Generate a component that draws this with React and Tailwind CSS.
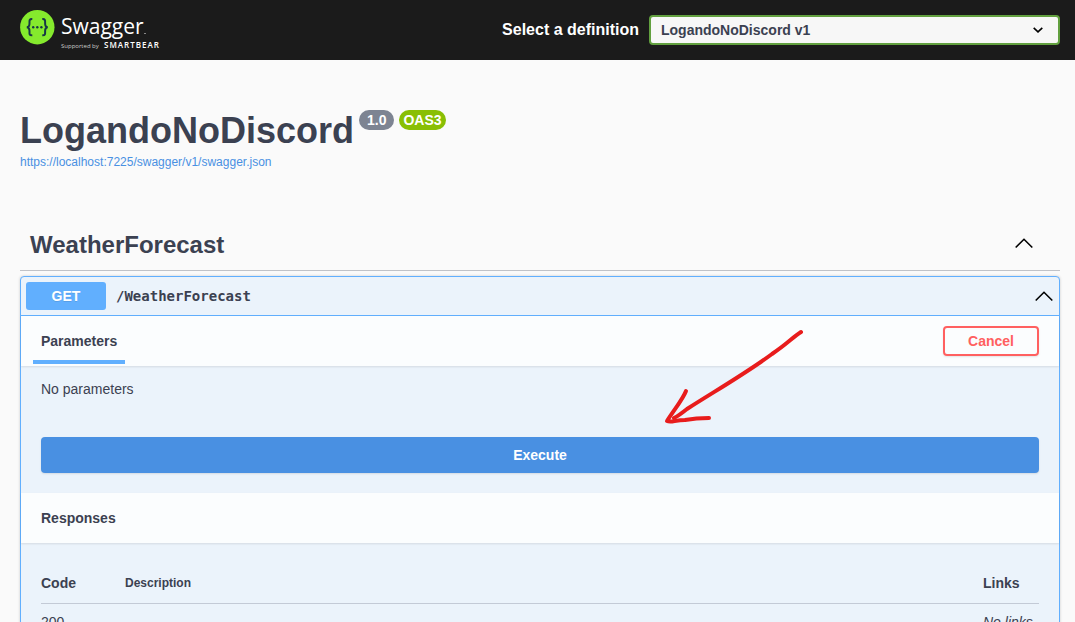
import React from "react";

function Logo() {
  return (
    <a href="#" aria-label="Swagger" className="block shrink-0">
      <svg width="142" height="42" viewBox="0 0 142 42" className="block">
        <circle cx="17.3" cy="18.2" r="17.2" fill="#85ea2d" />
        <g fill="none" stroke="#173647" strokeWidth="2">
          <path d="M12.300 10.100C9.200 9.900 9.400 11.500 9.500 13.900C9.600 16.500 9.300 18.100 6.800 18.200C9.300 18.400 9.600 20 9.500 22.500C9.400 24.900 9.200 26.500 12.300 26.300" />
          <path d="M22.300 10.100C25.400 9.900 25.200 11.500 25.100 13.900C25 16.500 25.300 18.100 27.800 18.200C25.300 18.400 25 20 25.100 22.500C25.200 24.900 25.400 26.500 22.300 26.300" />
        </g>
        <g fill="#173647">
          <circle cx="13.2" cy="18.2" r="1.2" />
          <circle cx="17.3" cy="18.2" r="1.2" />
          <circle cx="21.4" cy="18.2" r="1.2" />
        </g>
        <text x="41" y="25" fill="#fff" className="font-['Open_Sans','Noto_Sans',sans-serif] text-[21px]">Swagger</text>
        <rect x="124" y="24" width="2" height="1" fill="#888" />
        <text x="41" y="39" fill="#ccc" className="font-['Open_Sans','Noto_Sans',sans-serif] text-[6px]">Supported by</text>
        <text x="84" y="39" fill="#fff" className="font-['Open_Sans','Noto_Sans',sans-serif] text-[8px] font-semibold tracking-[1px]">SMARTBEAR</text>
      </svg>
    </a>
  );
}

function CollapseIcon() {
  return (
    <svg width="20" height="20" viewBox="0 0 20 20" className="block" fill="none" stroke="#000" strokeWidth="1.6">
      <path d="M1.700 14.500L10 6.300L18.300 14.500" />
    </svg>
  );
}

function Arrow() {
  return (
    <svg
      width="140"
      height="96"
      viewBox="0 0 140 96"
      className="pointer-events-none absolute top-[13px] left-[642px]"
      fill="none"
      stroke="#e81c1c"
      strokeWidth="4"
      strokeLinecap="round"
      strokeLinejoin="round"
      aria-hidden="true"
    >
      <path d="M138 3C130 8 124 15 109 25C82 45 52 62 24 80C19 84 15 87 11 89" />
      <path d="M23 62C20 70 11 81 4 92C8 94 12 91 22 91C33 89 38 89 46 89" />
    </svg>
  );
}

function SectionHeader({ children }) {
  return (
    <div className="flex min-h-[50px] items-center justify-between bg-white/80 px-5 shadow-[0_1px_2px_rgba(0,0,0,0.1)]">
      {children}
    </div>
  );
}

export default function App() {
  return (
    <div className="h-screen overflow-hidden bg-[#fafafa] font-['Liberation_Sans',Arial,sans-serif] text-[#3b4151]">
      <header className="flex h-[60px] items-center justify-between bg-[#1b1b1b] pr-[15px] pl-5">
        <Logo />
        <div className="flex items-center gap-2.5">
          <label htmlFor="definition" className="text-base font-bold text-white">
            Select a definition
          </label>
          <div className="relative">
            <select
              id="definition"
              className="block h-[30px] w-[411px] appearance-none rounded border-2 border-[#62a03f] bg-[#f7f7f7] pr-10 pl-2.5 text-sm font-bold text-[#3b4151]"
            >
              <option>LogandoNoDiscord v1</option>
            </select>
            <svg
              width="10"
              height="6"
              viewBox="0 0 10 6"
              fill="none"
              stroke="#000"
              strokeWidth="1.6"
              className="pointer-events-none absolute top-3 right-[17px]"
            >
              <path d="M0.700 0.800L5 4.800L9.300 0.800" />
            </svg>
          </div>
        </div>
      </header>

      <main className="pr-[15px] pl-5">
        <div className="pt-[50px]">
          <div className="flex items-start gap-[5px]">
            <h1 className="text-[36px] leading-[42px] font-bold">LogandoNoDiscord</h1>
            <span className="h-5 rounded-full bg-[#7d8492] px-2 text-sm leading-5 font-bold text-white">1.0</span>
            <span className="h-5 rounded-full bg-[#89bf04] px-1 text-sm leading-5 font-bold text-white">OAS3</span>
          </div>
          <a href="#" className="block w-fit text-xs leading-5 text-[#4990e2]">
            https://localhost:7225/swagger/v1/swagger.json
          </a>
        </div>

        <section className="mt-[47px]">
          <div className="flex h-[52px] items-center justify-between border-b border-[#c0c2c7] pr-[26px] pl-2.5">
            <h2 className="text-2xl font-bold">WeatherForecast</h2>
            <button type="button" aria-label="Collapse WeatherForecast" className="pb-[3px]">
              <CollapseIcon />
            </button>
          </div>

          <div className="mt-[5px] rounded border border-[#61affe] bg-[#ebf3fb] shadow-[0_0_3px_rgba(0,0,0,0.19)]">
            <div className="flex h-[39px] items-center border-b border-[#61affe] px-[5px]">
              <span className="w-20 rounded-[3px] bg-[#61affe] text-center text-sm leading-7 font-bold text-white [text-shadow:0_1px_0_rgba(0,0,0,0.1)]">
                GET
              </span>
              <span className="grow pl-2.5 font-['DejaVu_Sans_Mono',monospace] text-sm leading-5 font-bold">
                /WeatherForecast
              </span>
              <button type="button" aria-label="Collapse GET /WeatherForecast">
                <CollapseIcon />
              </button>
            </div>

            <div className="relative">
              <SectionHeader>
                <h3 className="-ml-2 h-12 self-start border-b-4 border-[#61affe] px-2 text-sm leading-[50px] font-bold">
                  Parameters
                </h3>
                <button
                  type="button"
                  className="h-[30px] w-24 rounded border-2 border-[#ff6060] text-sm font-bold text-[#ff6060] shadow-[0_1px_2px_rgba(0,0,0,0.1)]"
                >
                  Cancel
                </button>
              </SectionHeader>
              <div className="px-5 pt-[13px] pb-5">
                <p className="text-sm leading-5">No parameters</p>
                <button
                  type="button"
                  className="mt-[38px] block h-9 w-full rounded bg-[#4990e2] text-sm font-bold text-white shadow-[0_1px_2px_rgba(0,0,0,0.1)]"
                >
                  Execute
                </button>
              </div>
              <Arrow />
            </div>

            <SectionHeader>
              <h3 className="text-sm font-bold">Responses</h3>
            </SectionHeader>
            <div className="p-5">
              <table className="w-full border-collapse text-left text-sm leading-5">
                <thead>
                  <tr className="border-b border-[#c3cad6]">
                    <th scope="col" className="w-[84px] py-2.5 font-bold">Code</th>
                    <th scope="col" className="py-2.5 text-xs leading-5 font-bold">Description</th>
                    <th scope="col" className="w-14 py-2.5 font-bold">Links</th>
                  </tr>
                </thead>
                <tbody>
                  <tr>
                    <td className="pt-2">200</td>
                    <td />
                    <td className="pt-2 whitespace-nowrap italic">No links</td>
                  </tr>
                </tbody>
              </table>
            </div>
          </div>
        </section>
      </main>
    </div>
  );
}
